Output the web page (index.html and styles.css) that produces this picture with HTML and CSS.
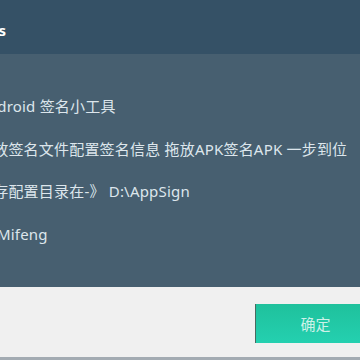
FILE: index.html
```html
<!DOCTYPE html>
<html>
<head>
    <title>Tips</title>
    <link rel="stylesheet" href="styles.css">
</head>
<body>

<div class="dialog">
    <div class="dialog-header">
        <span class="dialog-title">Tips</span>
    </div>
    <div class="dialog-body">
        <p class="info-line">Android 签名小工具</p>
        <p class="info-line">存放签名文件配置签名信息 拖放APK签名APK 一步到位</p>
        <p class="info-line">保存配置目录在-》 D:\AppSign</p>
        <p class="info-line">By Mifeng</p>
    </div>
    <div class="dialog-footer">
        <button type="button" class="btn-ok">确定</button>
    </div>
</div>

</body>
</html>
```

FILE: styles.css
```css
body {
    margin: 0;
    font-family: "Noto Sans", "Noto Sans CJK SC", sans-serif;
    overflow: hidden;
}
.dialog {
    width: 360px;
    height: 360px;
    overflow: hidden;
    display: flex;
    flex-direction: column;
}
.dialog-header {
    height: 54px;
    background-color: #355166;
    padding-top: 20px;
    box-sizing: border-box;
}
.dialog-title {
    display: block;
    margin-left: -24px;
    color: #ffffff;
    font-size: 15px;
    font-weight: bold;
    line-height: 20px;
}
.dialog-body {
    height: 233px;
    background-color: #475f70;
    padding-top: 42px;
    box-sizing: border-box;
}
.info-line {
    margin: 0 0 23px -22px;
    height: 20px;
    line-height: 20px;
    font-size: 15px;
    letter-spacing: 0.2px;
    color: #dde6ec;
    white-space: nowrap;
}
.info-line:nth-child(2) {
    margin-bottom: 22px;
}
.info-line:nth-child(4) {
    margin-left: -25px;
}
.dialog-footer {
    height: 73px;
    background-color: #f0f0f0;
    border-bottom: 3px solid #a3abb2;
    box-sizing: border-box;
    display: flex;
    justify-content: flex-end;
    padding-top: 17px;
}
.btn-ok {
    width: 120px;
    height: 39px;
    margin-right: -15px;
    border: none;
    border-left: 1px solid #4a6a60;
    background: linear-gradient(#1fc19c, #24d0b0);
    color: #cdf1e8;
    font-family: "Noto Sans CJK SC", sans-serif;
    font-size: 15px;
    cursor: pointer;
}
```
